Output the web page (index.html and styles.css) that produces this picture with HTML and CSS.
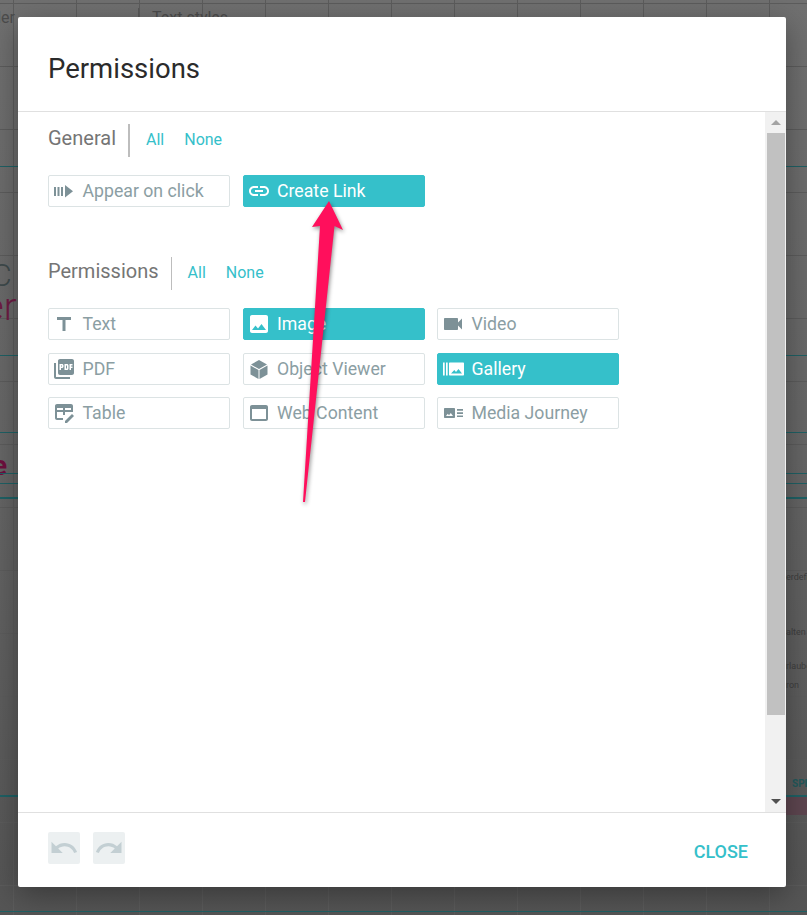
FILE: index.html
```html
<!DOCTYPE html>
<html lang="en">
<head>
    <meta charset="UTF-8">
    <meta name="viewport" content="width=device-width, initial-scale=1.0">
    <title>Permissions</title>
    <link rel="stylesheet" href="styles.css">
</head>
<body>

    <!-- dimmed page behind the dialog -->
    <div class="backdrop">
        <span class="bg-text bg-der">der</span>
        <span class="bg-rule"></span>
        <span class="bg-text bg-styles">Text styles</span>
        <span class="bg-text bg-c">C</span>
        <span class="bg-text bg-er">er</span>
        <span class="bg-text bg-e">e</span>
        <span class="bg-text bg-small bg-r1">erdefi</span>
        <span class="bg-text bg-small bg-r2">alten</span>
        <span class="bg-text bg-small bg-r3">rlauben</span>
        <span class="bg-text bg-small bg-r4">ron</span>
        <span class="bg-text bg-small bg-spei">SPEI</span>
        <span class="bg-band"></span>
        <span class="bg-line bg-l1"></span>
        <span class="bg-line bg-l2"></span>
        <span class="bg-line bg-l3"></span>
        <span class="bg-line bg-l4"></span>
        <span class="bg-line bg-l5"></span>
        <span class="bg-line bg-l6"></span>
        <span class="bg-line bg-l7"></span>
        <span class="bg-line bg-l8"></span>
    </div>

    <div class="modal">
        <div class="modal-header">
            <h1>Permissions</h1>
        </div>

        <div class="modal-body">
            <div class="modal-content">
                <div class="group-head">
                    <h2>General</h2>
                    <a class="group-link">All</a>
                    <a class="group-link">None</a>
                </div>
                <div class="perm-grid perm-grid-general">
                    <div class="perm">
                        <svg class="icon" viewBox="0 0 24 24"><path d="M2 8h2v9H2zM5.500 8h2v9h-2zM9 8h2v9H9zM13 6l8 6.200-8 6.300z"/></svg>
                        Appear on click
                    </div>
                    <div class="perm active">
                        <svg class="icon" viewBox="0 0 24 24"><path d="M3.900 12c0-1.710 1.390-3.100 3.100-3.100h4V7H7c-2.760 0-5 2.240-5 5s2.240 5 5 5h4v-1.900H7c-1.710 0-3.100-1.390-3.100-3.100zM8 13h8v-2H8v2zm9-6h-4v1.900h4c1.710 0 3.100 1.390 3.100 3.100s-1.390 3.100-3.100 3.100h-4V17h4c2.760 0 5-2.240 5-5s-2.240-5-5-5z"/></svg>
                        Create Link
                    </div>
                </div>

                <div class="group-head group-head-thin">
                    <h2>Permissions</h2>
                    <a class="group-link">All</a>
                    <a class="group-link">None</a>
                </div>
                <div class="perm-grid">
                    <div class="perm">
                        <svg class="icon" viewBox="0 0 24 24"><path d="M5 5v3h5.500v11h3V8H19V5z"/></svg>
                        Text
                    </div>
                    <div class="perm active">
                        <svg class="icon" viewBox="0 0 24 24"><path d="M21 19V5c0-1.100-.9-2-2-2H5c-1.100 0-2 .9-2 2v14c0 1.100.9 2 2 2h14c1.100 0 2-.9 2-2zM8.500 13.500l2.500 3.010L14.500 12l4.500 6H5l3.500-4.500z"/></svg>
                        Image
                    </div>
                    <div class="perm">
                        <svg class="icon" viewBox="0 0 24 24"><path d="M17 10.500V7c0-.55-.45-1-1-1H4c-.55 0-1 .45-1 1v10c0 .55.45 1 1 1h12c.55 0 1-.45 1-1v-3.500l4 4v-11l-4 4z"/></svg>
                        Video
                    </div>
                    <div class="perm">
                        <svg class="icon" viewBox="0 0 24 24"><path d="M20 2H8c-1.100 0-2 .9-2 2v12c0 1.100.9 2 2 2h12c1.100 0 2-.9 2-2V4c0-1.100-.9-2-2-2zm-8.500 7.500c0 .83-.67 1.500-1.500 1.500H9v2H7.500V7H10c.83 0 1.500.67 1.500 1.500v1zm5 2c0 .83-.67 1.500-1.500 1.500h-2.500V7H15c.83 0 1.500.67 1.500 1.500v3zm4-3H19v1h1.500V11H19v2h-1.500V7h3v1.500zM9 9.500h1v-1H9v1zM4 6H2v14c0 1.100.9 2 2 2h14v-2H4V6zm10 5.500h1v-3h-1v3z"/></svg>
                        PDF
                    </div>
                    <div class="perm">
                        <svg class="icon" viewBox="0 0 24 24"><path d="M12 3l8 4.500-8 4.600-8-4.600zM3.500 8.500l8 4.600V22l-8-4.600zM20.500 8.500l-8 4.600V22l8-4.600z"/></svg>
                        Object Viewer
                    </div>
                    <div class="perm active">
                        <svg class="icon" viewBox="0 0 24 24"><path d="M2 5.500h1.700v13H2zM5 5.500h1.700v13H5zM9 5.500h13c.6 0 1 .4 1 1v11c0 .6-.4 1-1 1H9c-.6 0-1-.4-1-1v-11c0-.6.4-1 1-1zm1 11h11l-3.500-4.500-2.500 3-1.700-2z" fill-rule="evenodd"/></svg>
                        Gallery
                    </div>
                    <div class="perm">
                        <svg class="icon" viewBox="0 0 24 24"><path d="M5 3h14c1.100 0 2 .9 2 2v6h-8v3h-2v-3H5v6h6v2H5c-1.100 0-2-.9-2-2V5c0-1.100.9-2 2-2zm0 4v2h6V7zm8 0v2h6V7z" fill-rule="evenodd"/><path d="M13 20v2h2l7-7-2-2z"/></svg>
                        Table
                    </div>
                    <div class="perm">
                        <svg class="icon" viewBox="0 0 24 24"><path d="M19 4H5c-1.110 0-2 .9-2 2v12c0 1.100.89 2 2 2h14c1.100 0 2-.9 2-2V6c0-1.100-.89-2-2-2zm0 14H5V8h14v10z"/></svg>
                        Web Content
                    </div>
                    <div class="perm">
                        <svg class="icon" viewBox="0 0 24 24"><path d="M4 7h9c.6 0 1 .4 1 1v8c0 .6-.4 1-1 1H4c-.6 0-1-.4-1-1V8c0-.6.4-1 1-1zm1 8h7l-2.200-3-1.800 2.200-1.200-1.400zM16 8h6v1.700h-6zM16 11.200h6v1.700h-6zM16 14.400h6v1.700h-6z" fill-rule="evenodd"/></svg>
                        Media Journey
                    </div>
                </div>
            </div>

            <div class="scrollbar">
                <span class="scroll-arrow up"></span>
                <div class="scroll-track"><div class="scroll-thumb"></div></div>
                <span class="scroll-arrow down"></span>
            </div>
        </div>

        <div class="modal-footer">
            <button class="history-btn">
                <svg class="icon" viewBox="0 0 24 24"><path d="M12.500 8c-2.650 0-5.050.99-6.900 2.600L2 7v9h9l-3.620-3.620c1.390-1.160 3.160-1.880 5.120-1.880 3.540 0 6.550 2.310 7.600 5.500l2.370-.78C21.080 11.030 17.150 8 12.500 8z"/></svg>
            </button>
            <button class="history-btn">
                <svg class="icon" viewBox="0 0 24 24"><path d="M18.400 10.600C16.550 8.990 14.150 8 11.500 8c-4.650 0-8.580 3.030-9.960 7.220L3.900 16c1.050-3.190 4.050-5.500 7.600-5.500 1.950 0 3.730.72 5.120 1.880L13 16h9V7l-3.600 3.600z"/></svg>
            </button>
            <a class="close-btn">CLOSE</a>
        </div>
    </div>

    <!-- annotation arrow drawn on top of the dialog -->
    <svg class="arrow" viewBox="0 0 807 915">
        <polygon points="329,201 343,230 334.500,226 305,502 303,502 320,226 312,227"/>
    </svg>

</body>
</html>
```

FILE: styles.css
```css
body {
    position: relative;
    box-sizing: border-box;
    width: 807px;
    height: 915px;
    margin: 0;
    padding: 17px 21px 28px 18px;
    overflow: hidden;
    font-family: Roboto, Arial, sans-serif;
    background-color: #6a6a6a;
    background-image: linear-gradient(180deg, #707070 0, #666 50%, #555 100%);
}

/* Background page */
.backdrop {
    position: absolute;
    inset: 0;
    overflow: hidden;
    background-image:
        repeating-linear-gradient(90deg, transparent 0 13px, #5c5c5c 13px 14px, transparent 14px 63px),
        repeating-linear-gradient(180deg, transparent 0 3px, #5c5c5c 3px 4px, transparent 4px 63px);
}
.bg-text {
    position: absolute;
    color: #4c4c4c;
    white-space: nowrap;
}
.bg-der { left: -8px; top: 8px; font-size: 16px; }
.bg-styles { left: 152px; top: 8px; font-size: 16px; }
.bg-rule {
    position: absolute;
    left: 138px;
    top: 8px;
    width: 1px;
    height: 12px;
    background: #585858;
}
.bg-c { left: -9px; top: 256px; font-size: 32px; font-weight: 300; color: #3f4a4c; }
.bg-er { left: -16px; top: 285px; font-size: 38px; font-weight: 300; color: #6e1c44; }
.bg-e { left: -8px; top: 449px; font-size: 28px; font-weight: 700; color: #6e0f3e; }
.bg-small { font-size: 9px; color: #3f3f3f; }
.bg-r1 { left: 786px; top: 572px; }
.bg-r2 { left: 786px; top: 627px; }
.bg-r3 { left: 786px; top: 661px; }
.bg-r4 { left: 786px; top: 680px; }
.bg-spei { left: 792px; top: 778px; font-size: 10px; font-weight: 700; color: #22595c; }
.bg-band {
    position: absolute;
    left: 786px;
    right: 0;
    top: 795px;
    height: 20px;
    background: #5e4650;
}
.bg-line {
    position: absolute;
    left: 0;
    right: 0;
    height: 1px;
    background: #1f6165;
}
.bg-l1 { top: 166px; }
.bg-l2 { top: 355px; }
.bg-l3 { top: 432px; }
.bg-l4 { top: 473px; }
.bg-l5 { top: 483px; }
.bg-l6 { top: 497px; height: 2px; }
.bg-l7 { top: 795px; height: 2px; }
.bg-l8 { top: 911px; }

/* Dialog */
.modal {
    position: relative;
    display: flex;
    flex-direction: column;
    height: 100%;
    background: #fff;
    border-radius: 2px;
    box-shadow: 0 8px 30px rgba(0, 0, 0, 0.35);
}
.modal-header {
    flex: none;
    height: 95px;
    box-sizing: border-box;
    padding: 36px 30px 0;
    border-bottom: 1px solid #e0e0e0;
}
h1 {
    margin: 0;
    font-size: 27.5px;
    line-height: 32px;
    font-weight: 400;
    color: #2b2b2b;
}
.modal-body {
    flex: 1;
    display: flex;
    min-height: 0;
}
.modal-content {
    flex: 1;
    padding: 12px 30px 0;
}
.group-head {
    display: flex;
    align-items: center;
    height: 33px;
    margin-bottom: 18px;
}
h2 {
    box-sizing: border-box;
    height: 100%;
    margin: 0 16px 0 0;
    padding-right: 12px;
    border-right: 2px solid #bdbdbd;
    font-size: 20px;
    line-height: 28px;
    font-weight: 400;
    color: #757575;
}
.group-head-thin h2 { border-right-width: 1px; }
.group-link {
    margin-right: 20px;
    margin-bottom: 2px;
    font-size: 16px;
    color: #35c0ca;
}

/* Permission buttons */
.perm-grid {
    display: grid;
    grid-template-columns: repeat(3, 182px);
    grid-auto-rows: 32px;
    column-gap: 12.5px;
    row-gap: 12.5px;
}
.perm-grid-general { margin-bottom: 50px; }
.perm {
    display: flex;
    align-items: center;
    gap: 6.5px;
    box-sizing: border-box;
    padding-left: 3px;
    border: 1px solid #dce3e4;
    border-radius: 2px;
    font-size: 17.7px;
    font-weight: 400;
    color: #8b9ea3;
    white-space: nowrap;
}
.perm.active {
    border-color: #35c0ca;
    background: #35c0ca;
    color: #fff;
}
.icon {
    flex: none;
    width: 24px;
    height: 24px;
    fill: #7d9197;
}
.active .icon { fill: #fff; }

/* Fake scrollbar */
.scrollbar {
    flex: none;
    display: flex;
    flex-direction: column;
    align-items: center;
    width: 21px;
    background: #f1f1f1;
}
.scroll-track {
    flex: 1;
    width: 100%;
    box-sizing: border-box;
    padding: 0 1px 0 2px;
}
.scroll-thumb {
    height: 582px;
    background: #c1c1c1;
}
.scroll-arrow {
    flex: none;
    width: 0;
    height: 0;
    margin: 8px 0;
    border-left: 5px solid transparent;
    border-right: 5px solid transparent;
}
.scroll-arrow.up { border-bottom: 5px solid #a3a3a3; }
.scroll-arrow.down { border-top: 5px solid #505050; }

/* Footer */
.modal-footer {
    flex: none;
    display: flex;
    align-items: center;
    gap: 13px;
    height: 75px;
    box-sizing: border-box;
    padding: 0 38px 0 30px;
    border-top: 1px solid #e0e0e0;
}
.history-btn {
    display: flex;
    align-items: center;
    justify-content: center;
    width: 32px;
    height: 32px;
    margin-bottom: 4px;
    padding: 0;
    border: none;
    border-radius: 2px;
    background: #ecf0f1;
}
.history-btn .icon { width: 30px; height: 30px; fill: #c3cfd3; }
.close-btn {
    margin-left: auto;
    padding-top: 2px;
    font-size: 18px;
    font-weight: 500;
    color: #35c0ca;
}

.arrow {
    position: absolute;
    left: 0;
    top: 0;
    width: 807px;
    height: 915px;
    fill: #ff0f5c;
    filter: drop-shadow(1px 2px 2px rgba(0, 0, 0, 0.45));
}
```
